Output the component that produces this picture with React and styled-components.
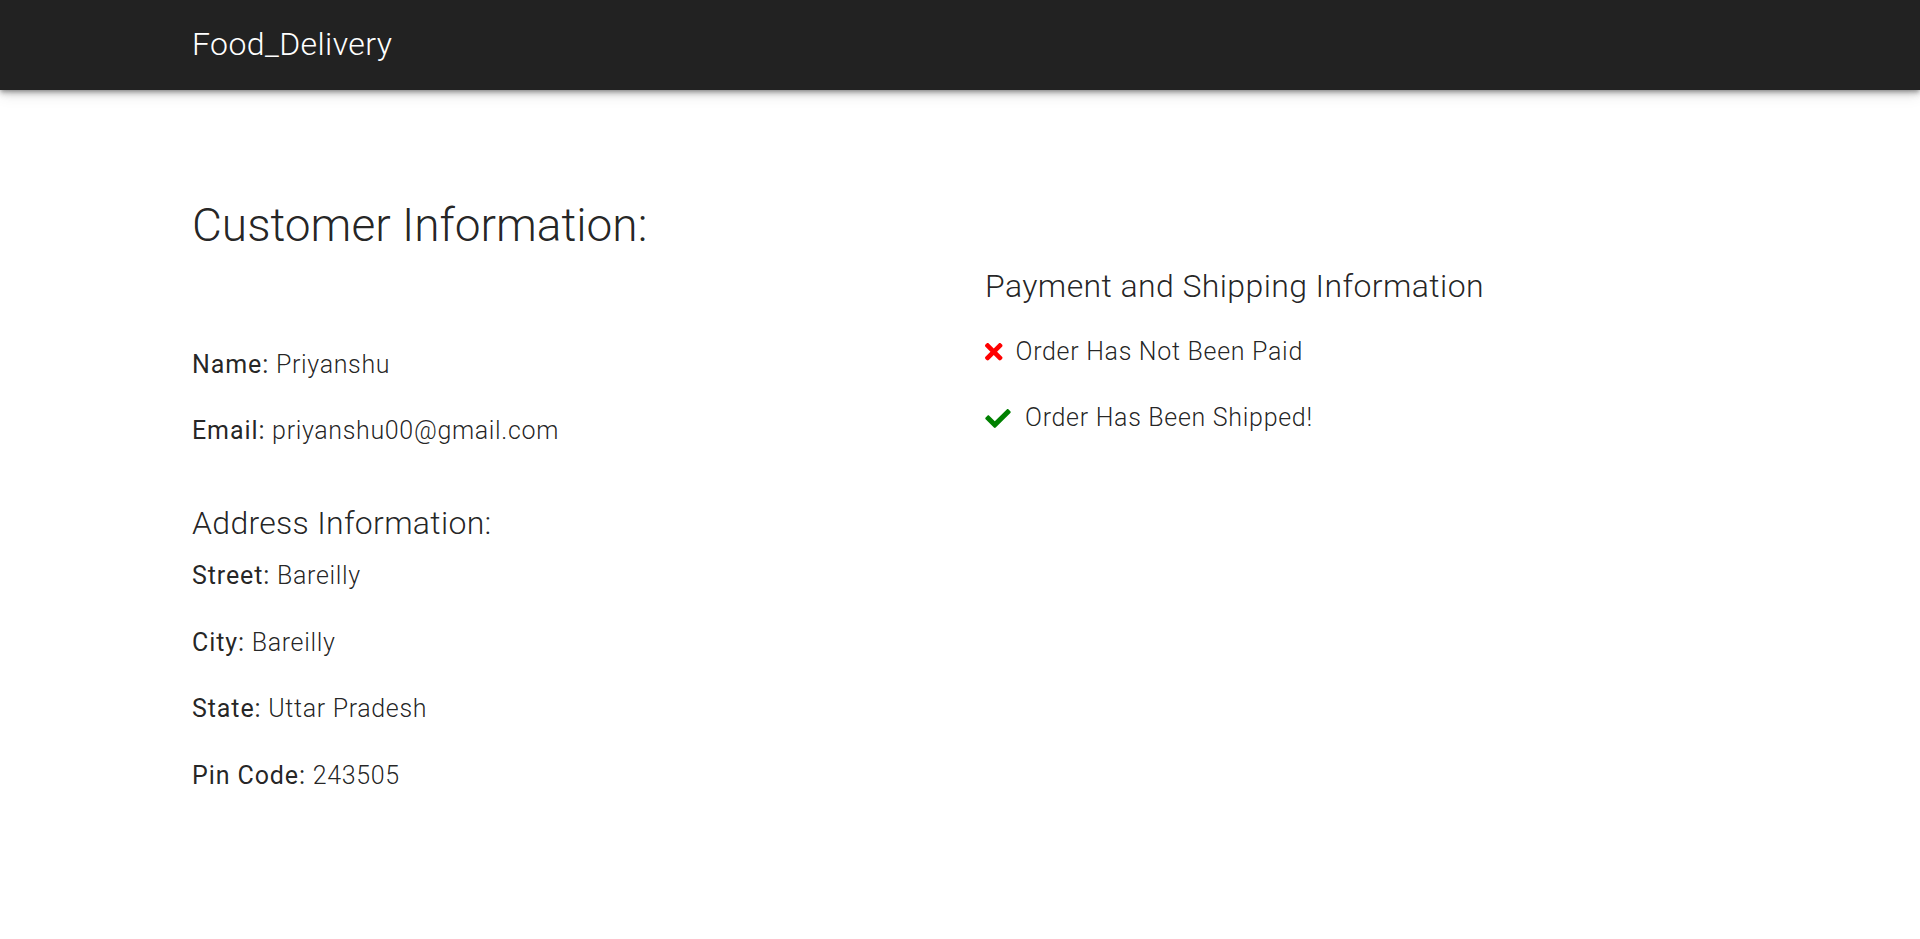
import React from "react";
import styled, { createGlobalStyle } from "styled-components";

const GlobalStyle = createGlobalStyle`
  html, body { margin: 0; padding: 0; background: #fff; }
  body {
    font-family: Roboto, "Noto Sans", "Liberation Sans", sans-serif;
    color: rgba(0, 0, 0, 0.87);
    -webkit-font-smoothing: antialiased;
  }
  * { box-sizing: border-box; }
`;

const NavBar = styled.nav`
  height: 90px;
  background: #222222;
  display: flex;
  align-items: center;
  padding-left: 192px;
  box-shadow: 0 4px 5px 0 rgba(0, 0, 0, 0.14), 0 1px 10px 0 rgba(0, 0, 0, 0.12),
    0 2px 4px -1px rgba(0, 0, 0, 0.3), 0 6px 14px rgba(0, 0, 0, 0.08);
  position: relative;
  z-index: 1;
`;

const Brand = styled.a`
  color: #fff;
  font-size: 32px;
  font-weight: 300;
  letter-spacing: 0.4px;
  line-height: 40px;
  text-decoration: none;
  margin-bottom: 3px;
`;

const Main = styled.main`
  display: grid;
  grid-template-columns: 793px 1fr;
  padding-left: 192px;
`;

const Column = styled.section`
  display: flex;
  flex-direction: column;
  padding-top: ${(p) => p.$top}px;
`;

const PageTitle = styled.h3`
  margin: 0 0 96px 0;
  font-size: 46px;
  font-weight: 300;
  line-height: 52px;
`;

const SubTitle = styled.h5`
  margin: ${(p) => p.$mt || 0}px 0 ${(p) => p.$mb || 0}px 0;
  font-size: 32px;
  font-weight: 300;
  letter-spacing: ${(p) => p.$ls || 0.3}px;
  line-height: 40px;
`;

const InfoList = styled.div`
  display: flex;
  flex-direction: column;
  gap: ${(p) => p.$gap || 30}px;
`;

const InfoLine = styled.p`
  margin: 0;
  font-size: 25px;
  line-height: 36px;
  font-weight: 300;
  letter-spacing: 0.65px;
`;

const Label = styled.span`
  font-weight: 400;
  letter-spacing: 0.9px;
`;

const StatusLine = styled.p`
  margin: 0;
  display: flex;
  align-items: center;
  gap: ${(p) => p.$gap}px;
  font-size: 25px;
  line-height: 36px;
  font-weight: 300;
  letter-spacing: 0.7px;
`;

const Icon = styled.svg`
  flex: none;
  display: block;
  fill: ${(p) => p.$color};
`;

const CrossIcon = () => (
  <Icon $color="#ff0000" width="17.5" height="17.5" viewBox="0 80 352 352">
    <path d="M242.72 256l100.07-100.07c12.28-12.28 12.28-32.19 0-44.48l-22.240-22.24c-12.28-12.28-32.19-12.28-44.48 0L176 189.28 75.93 89.21c-12.28-12.28-32.19-12.28-44.48 0L9.21 111.45c-12.28 12.28-12.28 32.19 0 44.48L109.28 256 9.21 356.07c-12.28 12.28-12.28 32.19 0 44.48l22.24 22.24c12.28 12.28 32.2 12.28 44.48 0L176 322.72l100.07 100.07c12.28 12.28 32.2 12.28 44.48 0l22.24-22.24c12.28-12.28 12.28-32.19 0-44.48L242.72 256z" />
  </Icon>
);

const CheckIcon = () => (
  <Icon $color="#008000" width="26" height="19" viewBox="0 65 512 382">
    <path d="M173.898 439.404l-166.4-166.4c-9.997-9.997-9.997-26.206 0-36.204l36.203-36.204c9.997-9.998 26.207-9.998 36.204 0L192 312.69 432.095 72.596c9.997-9.997 26.207-9.997 36.204 0l36.203 36.204c9.997 9.997 9.997 26.206 0 36.204l-294.4 294.401c-9.998 9.997-26.207 9.997-36.204-.001z" />
  </Icon>
);

const customer = [
  ["Name", "Priyanshu"],
  ["Email", "priyanshu00@gmail.com"],
];

const address = [
  ["Street", "Bareilly"],
  ["City", "Bareilly"],
  ["State", "Uttar Pradesh"],
  ["Pin Code", "243505"],
];

export default function App() {
  return (
    <>
      <GlobalStyle />
      <NavBar>
        <Brand href="#">Food_Delivery</Brand>
      </NavBar>
      <Main>
        <Column $top={109}>
          <PageTitle>Customer Information:</PageTitle>
          <InfoList>
            {customer.map(([k, v]) => (
              <InfoLine key={k}>
                <Label>{k}:</Label> {v}
              </InfoLine>
            ))}
          </InfoList>
          <SubTitle $mt={54} $mb={15}>Address Information:</SubTitle>
          <InfoList $gap={30.5}>
            {address.map(([k, v]) => (
              <InfoLine key={k}>
                <Label>{k}:</Label> {v}
              </InfoLine>
            ))}
          </InfoList>
        </Column>
        <Column $top={176}>
          <SubTitle $ls={0.4} $mb={28}>Payment and Shipping Information</SubTitle>
          <InfoList>
            <StatusLine $gap={13}>
              <CrossIcon />
              Order Has Not Been Paid
            </StatusLine>
            <StatusLine $gap={14}>
              <CheckIcon />
              Order Has Been Shipped!
            </StatusLine>
          </InfoList>
        </Column>
      </Main>
    </>
  );
}
